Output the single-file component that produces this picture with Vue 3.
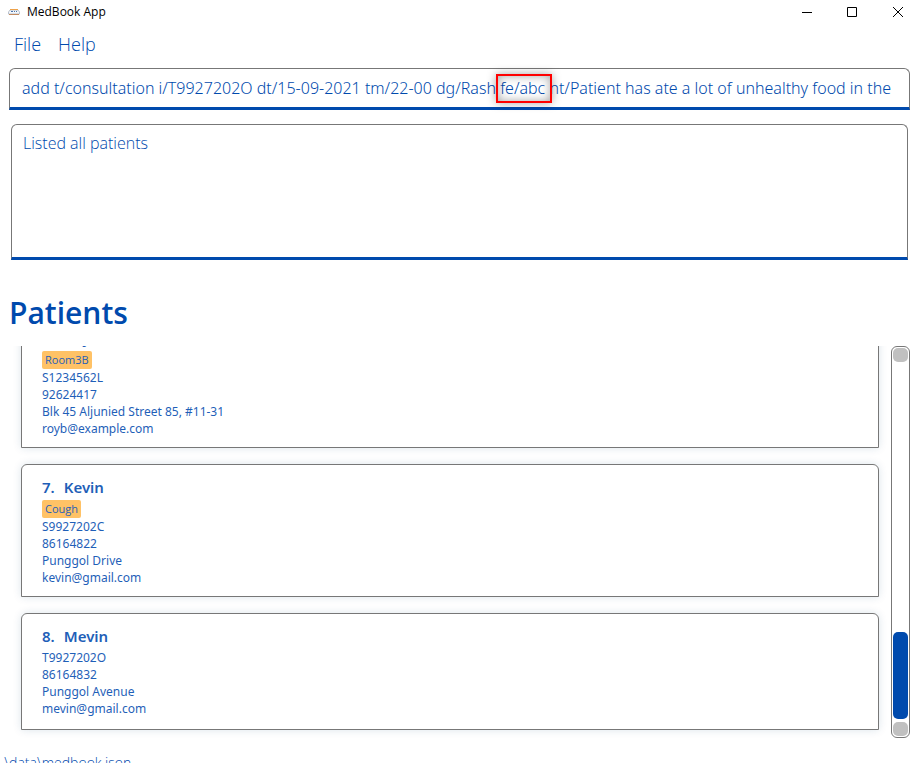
<script setup>
import { ref } from 'vue'

const command = ref('add t/consultation i/T9927202O dt/15-09-2021 tm/22-00 dg/Rash fe/abc nt/Patient has ate a lot of unhealthy food in the')
const result = ref('Listed all patients')

const patients = [
  { id: 6, name: 'Roy Balakrishnan', tags: ['Room3B'], lines: ['S1234562L', '92624417', 'Blk 45 Aljunied Street 85, #11-31', 'royb@example.com'] },
  { id: 7, name: 'Kevin', tags: ['Cough'], lines: ['S9927202C', '86164822', 'Punggol Drive', 'kevin@gmail.com'] },
  { id: 8, name: 'Mevin', tags: [], lines: ['T9927202O', '86164832', 'Punggol Avenue', 'mevin@gmail.com'] },
]
</script>

<template>
  <div class="window">
    <header class="titlebar">
      <svg class="logo" viewBox="0 0 12 8" aria-hidden="true">
        <path d="M2 2H10L11.5 4V6H.5V4Z" fill="#f4f7fa" stroke="#a9b4c2" stroke-width=".8" />
        <path d="M2 1.5H10" stroke="#eda24a" stroke-width="1" />
        <path d="M1 6.5H11" stroke="#c08a60" stroke-width="1" />
        <path d="M3 3.5H5M6 3.5H7M8 3.5H9" stroke="#4a74ad" stroke-width="1" />
      </svg>
      <span class="app-name">MedBook App</span>
      <div class="controls">
        <button type="button" aria-label="Minimize">
          <svg viewBox="0 0 12 12"><path d="M1 6.5H11" /></svg>
        </button>
        <button type="button" aria-label="Maximize">
          <svg viewBox="0 0 12 12"><path d="M.5 1.5H9.5V10.5H.5Z" /></svg>
        </button>
        <button type="button" aria-label="Close">
          <svg viewBox="0 0 12 12"><path d="M2 1L12 11M12 1L2 11" /></svg>
        </button>
      </div>
    </header>

    <nav class="menu">
      <button type="button">File</button>
      <button type="button">Help</button>
    </nav>

    <div class="command">
      <input v-model="command" type="text" aria-label="Command" spellcheck="false" />
      <span class="highlight"></span>
    </div>

    <textarea v-model="result" class="result" aria-label="Result" readonly></textarea>

    <h1>Patients</h1>

    <main class="panel">
      <div class="list">
        <article v-for="p in patients" :key="p.id" class="card">
          <h2><span>{{ p.id }}.</span><span>{{ p.name }}</span></h2>
          <div v-if="p.tags.length" class="tags">
            <span v-for="t in p.tags" :key="t" class="tag">{{ t }}</span>
          </div>
          <p v-for="line in p.lines" :key="line">{{ line }}</p>
        </article>
      </div>
      <div class="scrollbar">
        <button type="button" aria-label="Scroll up"></button>
        <div class="track"><div class="thumb"></div></div>
        <button type="button" aria-label="Scroll down"></button>
      </div>
    </main>

    <footer class="status">.\data\medbook.json</footer>
  </div>
</template>

<style>
body {
  background: #fff;
  overflow: hidden;
}
</style>

<style scoped>
.window {
  display: flex;
  flex-direction: column;
  height: 100vh;
  overflow: hidden;
  color: #004aad;
  background: #fff;
  font-family: "Noto Sans", "Open Sans", sans-serif;
}
.window * {
  box-sizing: border-box;
}
button {
  padding: 0;
  border: 0;
  background: none;
  color: inherit;
  font: inherit;
}
.titlebar {
  display: flex;
  align-items: center;
  flex: none;
  height: 24px;
  padding-left: 8px;
  color: #000;
}
.logo {
  width: 12px;
  height: 8px;
  margin-right: 7px;
}
.app-name {
  font-size: 12px;
  font-family: "Open Sans", sans-serif;
  line-height: 16px;
}
.controls {
  display: flex;
  margin-left: auto;
}
.controls button {
  display: flex;
  align-items: center;
  justify-content: center;
  width: 46px;
  height: 22px;
}
.controls button:last-child {
  width: 42px;
}
.controls svg {
  width: 12px;
  height: 12px;
  fill: none;
  stroke: #000;
}
.menu {
  display: flex;
  flex: none;
  gap: 17px;
  height: 44px;
  padding: 8px 14px;
}
.menu button {
  font-family: "Open Sans", sans-serif;
  font-size: 18px;
  font-weight: 300;
  line-height: 24px;
  height: 24px;
}
.command {
  position: relative;
  flex: none;
  height: 42px;
  margin: 0 8px 0 9px;
}
.command input {
  display: block;
  width: 100%;
  height: 100%;
  padding: 0 12px;
  border: 1px solid #777;
  border-bottom: 3px solid #004aad;
  border-radius: 6px 6px 0 0;
  outline: 0;
  background: #fff;
  color: inherit;
  font: 300 16px "Noto Sans", sans-serif;
}
.highlight {
  position: absolute;
  left: 487px;
  top: 6px;
  width: 56px;
  height: 29px;
  border: 2px solid #f00;
  box-shadow: 0 0 10px rgba(0, 0, 0, 0.35), inset 0 0 10px rgba(0, 0, 0, 0.35);
}
.result {
  display: block;
  flex: none;
  height: 136px;
  margin: 14px 10px 0 11px;
  padding: 6px 11px;
  border: 1px solid #777;
  border-bottom: 3px solid #004aad;
  border-radius: 6px 6px 0 0;
  outline: 0;
  resize: none;
  color: inherit;
  font: 300 16px/24px "Open Sans", sans-serif;
}
h1 {
  flex: none;
  margin: 32px 9px 12px;
  font-family: "Open Sans", sans-serif;
  font-size: 30px;
  font-weight: 600;
  line-height: 42px;
}
.panel {
  display: flex;
  flex: 1;
  min-height: 0;
  gap: 4px;
  padding: 0 8px 0 13px;
}
.list {
  display: flex;
  flex: 1;
  flex-direction: column;
  justify-content: flex-end;
  gap: 16px;
  padding: 0 8px 8px;
  overflow: hidden;
}
.card {
  flex: none;
  min-height: 117px;
  padding: 11px 20px 10px;
  border: 1px solid #777;
  border-radius: 6px 6px 0 0;
  background: #fff;
  color: #1f5fb8;
  box-shadow: 0 0 8px rgba(0, 74, 110, 0.14);
}
.card h2 {
  display: flex;
  gap: 9px;
  margin: 0 0 2px;
  font-size: 15px;
  font-weight: 600;
  line-height: 22px;
}
.card p {
  margin: 0;
  font-size: 12px;
  line-height: 17px;
}
.tags {
  display: flex;
  gap: 4px;
}
.tag {
  padding: 0 3px;
  border-radius: 2px;
  background: #ffc266;
  font-family: "Open Sans", sans-serif;
  font-size: 11px;
  line-height: 18px;
}
.scrollbar {
  display: flex;
  flex-direction: column;
  gap: 2px;
  width: 19px;
  padding: 1px;
  border: 1px solid #777;
  border-radius: 6px;
}
.scrollbar button {
  flex: none;
  height: 14px;
  border-radius: 5px;
  background: #c0c0c0;
}
.track {
  display: flex;
  flex: 1;
  flex-direction: column;
  justify-content: flex-end;
  padding-bottom: 1px;
}
.thumb {
  height: 24.5%;
  border-radius: 5px;
  background: #004aad;
}
.status {
  flex: none;
  height: 25px;
  padding: 15px 1px 0;
  font-family: "Open Sans", sans-serif;
  font-size: 14px;
  font-weight: 300;
  line-height: 20px;
}
</style>
